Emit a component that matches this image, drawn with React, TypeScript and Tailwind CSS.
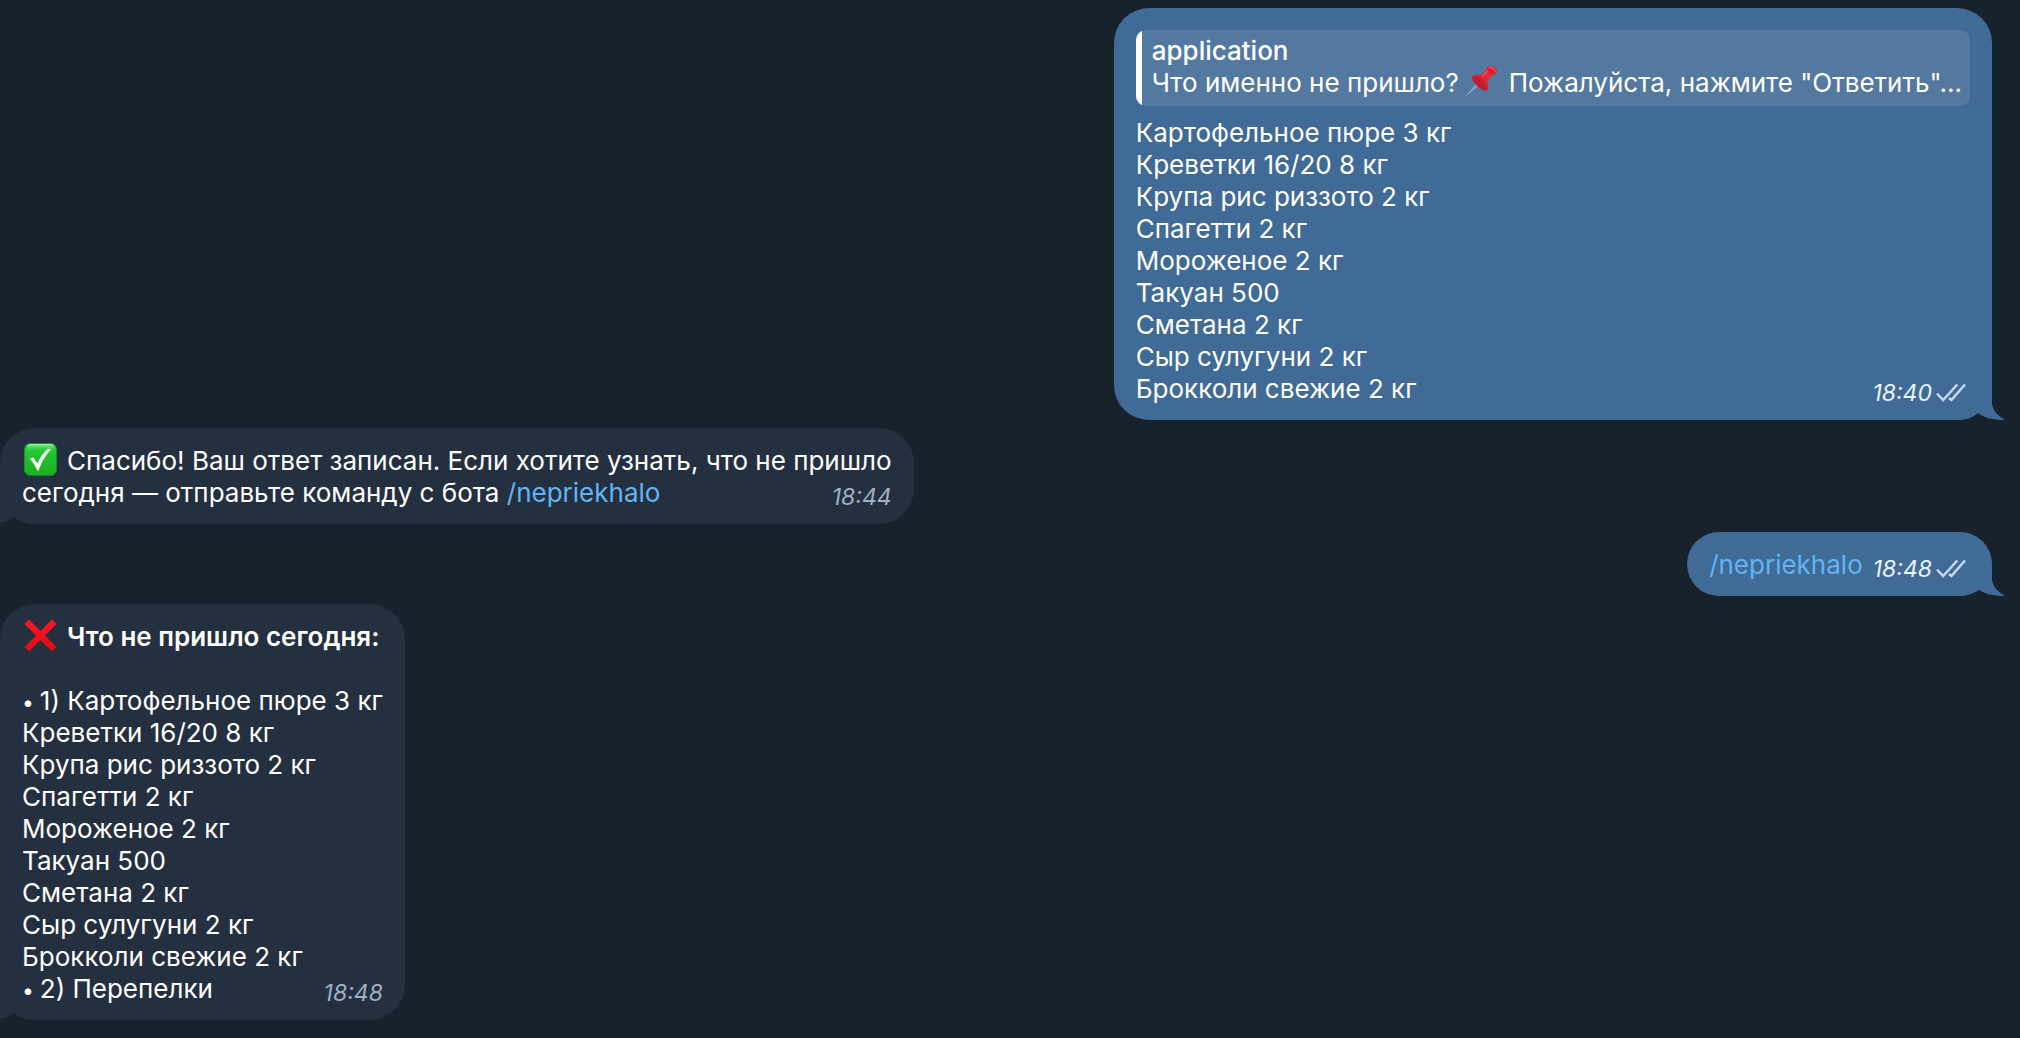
import React from "react";

const items = [
  "Картофельное пюре 3 кг",
  "Креветки 16/20 8 кг",
  "Крупа рис риззото 2 кг",
  "Спагетти 2 кг",
  "Мороженое 2 кг",
  "Такуан 500",
  "Сметана 2 кг",
  "Сыр сулугуни 2 кг",
  "Брокколи свежие 2 кг",
];

function PushPin() {
  return (
    <svg className="-my-2 mr-3 ml-1.5 inline-block h-8 w-8 align-[3px]" viewBox="0 0 32 32" role="img" aria-label="pushpin">
      <path d="M0.5 31.5 13 17l2 2z" fill="#b4d2e8" />
      <path d="M3 28.500 13.500 17.500l1 1z" fill="#5d7c99" />
      <path d="M7.500 11.500c2.500-3 6-2 8-.8l6.500-6c-.8-3 2-5 5-3.600 3 1.200 5.500 4 4.700 6.500-.6 1.800-2.500 2.300-4.200 2l-5.500 7c1.500 2.500 2.300 6 0 8.700-3 .5-6.500-1.300-9.500-4.300s-5.500-6-5-9.500z" fill="#d8202f" />
      <path d="M7.500 11.500c3-.6 7 1.700 9.700 4.500 2.700 2.800 4.800 6 4.800 9.300-3 .5-6.500-1.300-9.500-4.300s-5.500-6-5-9.500z" fill="#c21b2c" />
      <path d="M15.500 10.700l6.500-6c1 2 3 4.200 5.500 4.900l-5.500 7c-2-.8-5-3.500-6.500-5.900z" fill="#e42c39" />
      <path d="M24 2.500c2-.8 5 1.200 6 3.800" fill="none" stroke="#f5525c" strokeWidth="1.500" strokeLinecap="round" />
      <path d="M17.500 11l5-4.500" fill="none" stroke="#f5525c" strokeWidth="1.500" strokeLinecap="round" />
    </svg>
  );
}

function CheckBoxMark() {
  return (
    <svg className="-my-2 mr-2.5 ml-0.5 inline-block h-[33px] w-[33px] align-[2px]" viewBox="0 0 33 33" role="img" aria-label="done">
      <defs>
        <linearGradient id="green" x1="0" y1="0" x2="0" y2="1">
          <stop offset="0" stopColor="#35d04a" />
          <stop offset="0.3" stopColor="#22c62e" />
          <stop offset="1" stopColor="#1cae22" />
        </linearGradient>
        <linearGradient id="gloss" x1="0" y1="0" x2="0" y2="1">
          <stop offset="0" stopColor="#9df0a6" />
          <stop offset="1" stopColor="#35cf44" stopOpacity="0" />
        </linearGradient>
      </defs>
      <rect x="0.500" y="0.500" width="32" height="32" rx="6" fill="url(#green)" stroke="#15902a" />
      <rect x="3" y="1" width="27" height="7" rx="3" fill="url(#gloss)" />
      <path d="M5.500 15.500 9.500 14.500 13.300 20.500C16 14.500 19.500 9.500 23.500 6L27.300 6C21.500 12 17.500 19 14.500 27.500L13.300 27.500C11.500 23 9 19 5.500 15.500z" fill="#fff" />
    </svg>
  );
}

function CrossMark() {
  return (
    <svg className="-my-2 mr-2.5 ml-0.5 inline-block h-[33px] w-[33px] align-[2px]" viewBox="0 0 33 33" role="img" aria-label="missing">
      <defs>
        <linearGradient id="red" x1="0" y1="0" x2="0" y2="1">
          <stop offset="0" stopColor="#fb1620" />
          <stop offset="1" stopColor="#e00b16" />
        </linearGradient>
      </defs>
      <path d="M5 0.500 16.500 12 28 0.500 32.500 5 21 16.500 32.500 28 28 32.500 16.500 21 5 32.500 0.500 28 12 16.500 0.500 5z" fill="url(#red)" />
    </svg>
  );
}

function Ticks() {
  return (
    <svg className="h-5 w-[30px]" viewBox="0 0 30 20" fill="none" stroke="#c9dcec" strokeWidth="2.400" role="img" aria-label="read">
      <path d="M1 10.500 7.200 17 21.300 1.500" />
      <path d="M13 15 15.400 17 29 1.500" />
    </svg>
  );
}

function Time({ value, read = false }: { value: string; read?: boolean }) {
  return (
    <span
      className={
        read
          ? "flex h-6 shrink-0 items-center gap-1 pr-1 text-[23px] italic leading-6 text-[#eaf4fb]"
          : "flex h-6 shrink-0 items-center text-[23px] italic leading-6 text-[#9fb1c3]"
      }
    >
      <time>{value}</time>
      {read && <Ticks />}
    </span>
  );
}

function Bullet() {
  return <span className="mr-1.5 text-[21px] leading-6">•</span>;
}

function OutTail() {
  return (
    <svg className="absolute -right-3 bottom-0 h-[34px] w-[46px]" viewBox="0 0 46 34" aria-hidden="true">
      <path d="M0 34C8 34 14 32 20 27 26 32 36 34 46 34V33C40 30 34 24 34 16V0H0z" fill="#406b96" />
    </svg>
  );
}

function InTail() {
  return (
    <svg className="absolute bottom-0 left-0 h-[34px] w-[34px]" viewBox="0 0 34 34" aria-hidden="true">
      <path d="M0 0V33C6 32 10 30 14 27 20 32 26 34 34 34V0z" fill="#24303f" />
    </svg>
  );
}

export default function App() {
  return (
    <main className="flex min-h-screen flex-col gap-2 bg-[#18222c] pt-2 pb-4 font-['Inter','Noto_Sans',sans-serif] text-[26px] leading-8 text-white">
      <article className="relative mr-7 w-fit self-end px-[22px] pt-[22px] pb-[15px]">
        <div className="absolute inset-0 rounded-[35px] bg-[#406b96]" />
        <OutTail />
        <div className="relative">
          <blockquote className="mb-[11px] flex overflow-hidden rounded-[10px] bg-[#5479a1]">
            <div className="w-1.5 shrink-0 bg-white" />
            <div className="pt-[5px] pr-2 pb-[7px] pl-2.5">
              <p className="font-medium">application</p>
              <p className="whitespace-nowrap">
                Что именно не пришло?
                <PushPin />
                Пожалуйста, нажмите "Ответить"...
              </p>
            </div>
          </blockquote>
          <div className="flex items-end justify-between">
            <ul>
              {items.map((item) => (
                <li key={item}>{item}</li>
              ))}
            </ul>
            <Time value="18:40" read />
          </div>
        </div>
      </article>

      <article className="relative w-fit self-start px-[22px] pt-[17px] pb-[15px]">
        <div className="absolute inset-0 rounded-[35px] bg-[#24303f]" />
        <InTail />
        <div className="relative">
          <p className="whitespace-nowrap">
            <CheckBoxMark />
            Спасибо! Ваш ответ записан. Если хотите узнать, что не пришло
          </p>
          <div className="flex items-end justify-between">
            <p>
              сегодня — отправьте команду с бота{" "}
              <a href="#nepriekhalo" className="text-[#62b5f5]">/nepriekhalo</a>
            </p>
            <Time value="18:44" />
          </div>
        </div>
      </article>

      <article className="relative mr-7 w-fit self-end px-[22px] pt-[17px] pb-[15px]">
        <div className="absolute inset-0 rounded-[35px] bg-[#406b96]" />
        <OutTail />
        <div className="relative flex items-end gap-2.5">
          <a href="#nepriekhalo" className="text-[#62b5f5]">/nepriekhalo</a>
          <Time value="18:48" read />
        </div>
      </article>

      <article className="relative w-fit self-start px-[22px] pt-[17px] pb-[15px]">
        <div className="absolute inset-0 rounded-[35px] bg-[#24303f]" />
        <InTail />
        <div className="relative">
          <h2 className="mb-8 whitespace-nowrap font-semibold">
            <CrossMark />
            Что не пришло сегодня:
          </h2>
          <ul>
            {items.map((item, index) => (
              <li key={item}>
                {index === 0 && <Bullet />}
                {index === 0 ? `1) ${item}` : item}
              </li>
            ))}
          </ul>
          <div className="flex items-end justify-between">
            <p>
              <Bullet />
              2) Перепелки
            </p>
            <Time value="18:48" />
          </div>
        </div>
      </article>
    </main>
  );
}
